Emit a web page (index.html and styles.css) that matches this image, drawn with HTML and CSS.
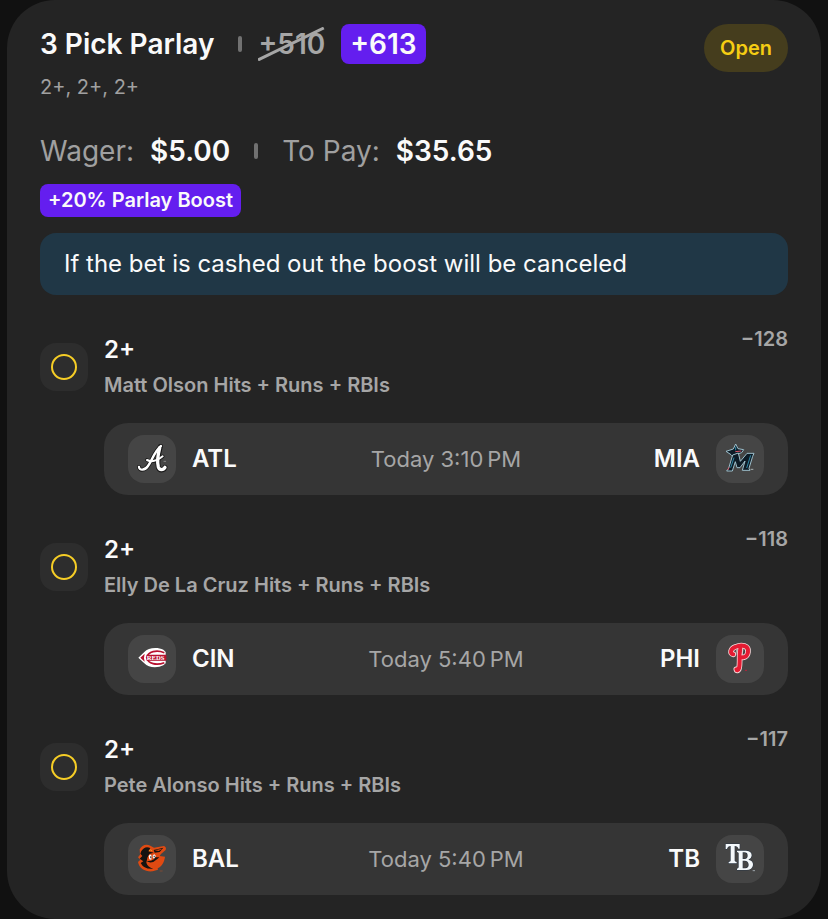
FILE: index.html
```
<!DOCTYPE html>
<html lang="en">
<head>
<meta charset="utf-8">
<meta name="viewport" content="width=device-width, initial-scale=1">
<title>3 Pick Parlay</title>
<link rel="stylesheet" href="styles.css">
</head>
<body>
<main class="card">
  <header class="header">
    <div class="title-row">
      <h1 class="title">3 Pick Parlay</h1>
      <span class="divider"></span>
      <span class="old-odds">+510<svg class="slash" viewBox="0 0 68 34" preserveAspectRatio="none" aria-hidden="true"><path d="M0 33 67 1"/></svg></span>
      <strong class="new-odds">+613</strong>
    </div>
    <span class="status">Open</span>
  </header>
  <p class="summary">2+, 2+, 2+</p>
  <div class="stakes">
    <span class="label">Wager:</span>
    <strong class="amount">$5.00</strong>
    <span class="divider"></span>
    <span class="label">To Pay:</span>
    <strong class="amount">$35.65</strong>
  </div>
  <span class="boost">+20% Parlay Boost</span>
  <p class="notice">If the bet is cashed out the boost will be canceled</p>

  <section class="legs">
    <article class="leg">
      <span class="marker"><span class="ring"></span></span>
      <div class="pick">
        <h2 class="pick-title">2+</h2>
        <p class="pick-detail">Matt Olson Hits + Runs + RBIs</p>
      </div>
      <span class="odds">−128</span>
      <div class="game">
        <div class="team">
          <svg class="logo" viewBox="24 24 144 144" aria-hidden="true">
            <g fill="none" stroke-linecap="round" stroke-linejoin="round">
              <g stroke="#171717">
                <path stroke-width="12" d="M57 120C58 132 75 130 84 117C97 99 103 73 123 57"/>
                <path stroke-width="15" d="M121 59C116 80 110 101 115 120C118 132 132 131 135 121"/>
                <path stroke-width="11" d="M81 99C96 107 112 101 128 88"/>
              </g>
              <g stroke="#fff">
                <path stroke-width="7" d="M57 120C58 132 75 130 84 117C97 99 103 73 123 57"/>
                <path stroke-width="10" d="M119 63C114 82 110 101 115 120C118 130 130 130 135 121"/>
                <path stroke-width="6" d="M81 99C96 107 112 101 128 88"/>
              </g>
              <path stroke="#aaa" stroke-width="2" d="M132 103h5"/>
            </g>
          </svg>
          <span class="abbr">ATL</span>
        </div>
        <time class="time">Today 3:10&#8239;PM</time>
        <div class="team away">
          <span class="abbr">MIA</span>
          <svg class="logo" viewBox="24 24 144 144" aria-hidden="true">
            <g stroke="#9dbfcb" stroke-width="3" stroke-linejoin="round" fill="#0d1b26">
              <path d="M54 73 76 66 83 51 90 65 107 68 101 77 92 80 76 90 69 83Z"/>
              <path d="M74 84 91 78 97 103 117 79H138L134 88 123 124 126 130H103L111 102 96 122H87L82 104 73 132H56L62 124Z"/>
            </g>
            <path fill="none" stroke="#2f88a6" stroke-width="3" d="M78 92 68 122M128 85 116 123M83 59v11"/>
            <path fill="none" stroke="#d95668" stroke-width="3" d="M82 74 100 72M63 121 59 129"/>
            <path fill="none" stroke="#d9e7ec" stroke-width="2" d="M128 127h8"/>
          </svg>
        </div>
      </div>
    </article>

    <article class="leg">
      <span class="marker"><span class="ring"></span></span>
      <div class="pick">
        <h2 class="pick-title">2+</h2>
        <p class="pick-detail">Elly De La Cruz Hits + Runs + RBIs</p>
      </div>
      <span class="odds">−118</span>
      <div class="game">
        <div class="team">
          <svg class="logo" viewBox="24 24 144 144" aria-hidden="true">
            <path fill="#fff" d="M55 92 73 75C84 61 114 60 130 68L137 75V84H88Q84 92 88 100H137V109L130 115C113 124 85 123 73 109Z"/>
            <path fill="#b81230" d="M61 92 74 80Q70 92 74 104Z"/>
            <path fill="none" stroke="#b81230" stroke-width="5" d="M133 77C110 68 84 73 80 92C84 111 110 116 133 107"/>
            <path fill="#b81230" d="M80 83H139V101H80Z"/>
            <text class="logo-reds" x="80" y="98">REDS</text>
          </svg>
          <span class="abbr">CIN</span>
        </div>
        <time class="time">Today 5:40&#8239;PM</time>
        <div class="team away">
          <span class="abbr">PHI</span>
          <svg class="logo" viewBox="24 24 144 144" aria-hidden="true">
            <g fill="none" stroke-linecap="round" stroke-linejoin="round">
              <path stroke="#f5d5d7" stroke-width="17" d="M76 82C65 81 67 65 82 60C101 51 123 56 120 75C118 90 106 94 98 89M97 65C93 86 97 108 93 124C91 132 86 131 85 127"/>
              <path stroke="#e51b32" stroke-width="12" d="M76 82C65 81 67 65 82 60C101 51 123 56 120 75C118 90 106 94 98 89M97 65C93 86 97 108 93 124C91 132 86 131 85 127"/>
              <path stroke="#f5d5d7" stroke-width="2" d="M86 69 83 84M105 68 102 84"/>
              <path stroke="#b5243a" stroke-width="3" d="M112 130h4"/>
            </g>
          </svg>
        </div>
      </div>
    </article>

    <article class="leg">
      <span class="marker"><span class="ring"></span></span>
      <div class="pick">
        <h2 class="pick-title">2+</h2>
        <p class="pick-detail">Pete Alonso Hits + Runs + RBIs</p>
      </div>
      <span class="odds">−117</span>
      <div class="game">
        <div class="team">
          <svg class="logo" viewBox="24 24 144 144" aria-hidden="true">
            <path fill="#df4a12" d="M59 67C65 55 78 49 91 56L102 62 132 57Q140 60 137 69L123 81 119 87 135 89C133 105 126 118 113 124L114 128 98 133C76 135 57 124 54 105L61 98 54 91 60 83Z"/>
            <path fill="#151311" d="M64 72Q75 55 91 63L85 73 101 77 88 81 82 92 79 107Q83 120 100 125 72 128 62 108L70 103 59 95 67 87 61 80Z"/>
            <path fill="#151311" d="M101 69 130 62 119 75 104 77Z"/>
            <path fill="#df4a12" d="M104 70 127 65 116 72Z"/>
            <path fill="#fff" d="M86 87Q91 78 95 87L94 98 88 97ZM98 86Q103 77 107 86L105 94 99 94Z"/>
            <path fill="#151311" d="M91 88h3v6h-3zM101 86h3v5h-3zM80 103Q96 112 112 96L118 91 106 91 102 97 93 101Z"/>
            <path fill="#df4a12" d="M82 105Q96 116 115 98L130 92Q123 113 106 119 87 119 82 105Z"/>
            <path fill="none" stroke="#ef9b20" stroke-width="3" d="M87 72Q91 66 96 71"/>
            <path stroke="#9a4b2b" stroke-width="2" d="M119 132h9"/>
          </svg>
          <span class="abbr">BAL</span>
        </div>
        <time class="time">Today 5:40&#8239;PM</time>
        <div class="team away">
          <span class="abbr">TB</span>
          <svg class="logo" viewBox="24 24 144 144" aria-hidden="true">
            <path fill="#f4f8fb" stroke="#1d2d43" stroke-width="2" paint-order="stroke" d="M53 51H95V65H91Q89 57 80 57V101Q80 104 86 105V109H62V105Q68 104 68 101V57Q59 57 57 66H53Z"/>
            <path fill="#f4f8fb" stroke="#1d2d43" stroke-width="2" paint-order="stroke" fill-rule="evenodd" d="M87 71H114Q132 72 131 86Q130 95 121 98Q136 101 135 114Q133 129 115 129H87V125Q92 124 92 121V79Q92 76 87 75ZM104 76V96H110Q119 95 119 86Q119 76 109 76ZM104 101V124H112Q122 123 122 113Q121 101 110 101Z"/>
            <path stroke="#c9d6df" stroke-width="2" d="M134 131h7"/>
          </svg>
        </div>
      </div>
    </article>
  </section>
</main>
</body>
</html>
```
FILE: styles.css
```
* {
  box-sizing: border-box;
}

body {
  margin: 0;
  background: #111;
  color: #fafafa;
  font-family: Inter, "Liberation Sans", sans-serif;
}

h1,
h2,
p {
  margin: 0;
}

.card {
  margin: 0 7px;
  padding: 24px 33px;
  border-radius: 48px;
  background: #242424;
}

.header {
  display: flex;
  justify-content: space-between;
  align-items: flex-start;
}

.title-row {
  display: flex;
  align-items: center;
  height: 40px;
}

.title,
.old-odds,
.new-odds,
.amount {
  font-size: 28px;
  font-weight: 600;
  line-height: 40px;
}

.divider {
  width: 4px;
  height: 16px;
  margin: 0 24px;
  border-radius: 2px;
  background: #717171;
}

.title-row .divider {
  margin-right: 16px;
}

.old-odds {
  position: relative;
  color: #a6a6a6;
}

.slash {
  position: absolute;
  top: 3px;
  left: 0;
  width: 100%;
  height: 34px;
  fill: none;
  stroke: #a6a6a6;
  stroke-width: 3px;
}

.new-odds {
  margin-left: 16px;
  padding: 0 9px;
  border-radius: 8px;
  background: #641eef;
}

.status {
  padding: 0 16px;
  border-radius: 24px;
  background: #453d1d;
  color: #f5cd13;
  font-size: 20px;
  font-weight: 600;
  line-height: 48px;
}

.summary {
  color: #a0a0a0;
  font-size: 20px;
  line-height: 30px;
}

.stakes {
  display: flex;
  align-items: center;
  margin-top: 29px;
}

.label {
  margin-right: 16px;
  color: #a0a0a0;
  font-size: 28px;
  font-weight: 400;
  line-height: 40px;
}

.boost {
  display: block;
  width: fit-content;
  margin-top: 13px;
  padding: 0 8px;
  border-radius: 8px;
  background: #641eef;
  font-size: 20px;
  font-weight: 600;
  line-height: 33px;
}

.notice {
  margin-top: 16px;
  padding: 15px 24px;
  border-radius: 16px;
  background: #203746;
  font-size: 24px;
  line-height: 32px;
}

.legs {
  display: grid;
  gap: 32px;
  margin-top: 32px;
}

.leg {
  display: grid;
  grid-template-columns: 48px 1fr auto;
  column-gap: 16px;
  align-items: start;
}

.marker {
  display: grid;
  place-items: center;
  height: 48px;
  margin-top: 16px;
  border-radius: 16px;
  background: #2d2d2d;
}

.ring {
  width: 26px;
  height: 26px;
  border: 2px solid #f5cd26;
  border-radius: 50%;
}

.pick {
  padding-top: 7px;
}

.pick-title,
.abbr {
  font-size: 24px;
  font-weight: 600;
  line-height: 32px;
}

.pick-detail {
  margin-top: 7px;
  color: #a6a6a6;
  font-size: 20px;
  font-weight: 600;
  line-height: 24px;
}

.odds {
  color: #a6a6a6;
  font-size: 20px;
  font-weight: 600;
  line-height: 24px;
}

.game {
  display: grid;
  grid-column: 2 / -1;
  grid-template-columns: 1fr auto 1fr;
  align-items: center;
  margin-top: 26px;
  padding: 12px 24px;
  border-radius: 24px;
  background: #353535;
}

.team {
  display: flex;
  align-items: center;
  gap: 16px;
}

.away {
  justify-content: flex-end;
}

.time {
  color: #a6a6a6;
  font-size: 22px;
  line-height: 32px;
}

.logo {
  display: block;
  width: 48px;
  height: 48px;
  border-radius: 16px;
  background: #454545;
}

.logo-reds {
  fill: #fff;
  font-family: "Liberation Serif", serif;
  font-size: 20px;
  font-weight: 700;
}
```
